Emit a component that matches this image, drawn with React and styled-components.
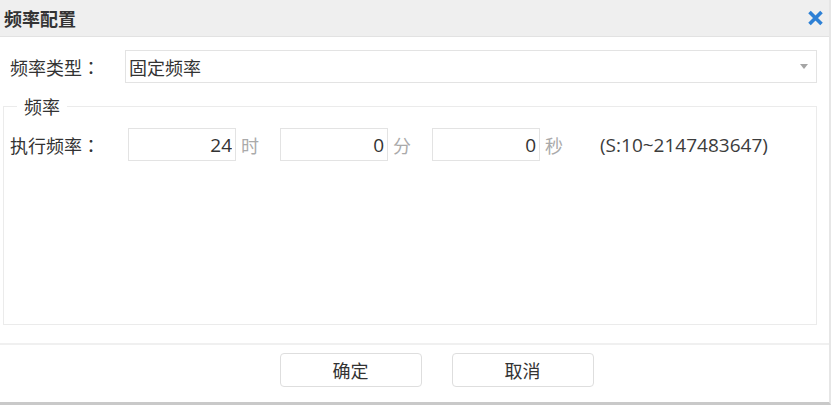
import React from "react";
import styled, { createGlobalStyle } from "styled-components";

const GlobalStyle = createGlobalStyle`
  html, body {
    margin: 0;
    padding: 0;
    background: #ffffff;
  }
  body {
    font-family: "Open Sans", "Noto Sans CJK SC", sans-serif;
    color: #333;
    overflow: hidden;
  }
`;

const Dialog = styled.div`
  width: 831px;
  height: 405px;
  box-sizing: border-box;
  display: flex;
  flex-direction: column;
  background: #fff;
  border-right: 2px solid #e6e6e6;
  border-bottom: 3px solid #c9c9c9;
`;

const Header = styled.div`
  height: 36px;
  flex: none;
  display: flex;
  align-items: center;
  justify-content: space-between;
  padding: 0 4px 0 4px;
  background: #efefef;
  border-bottom: 1px solid #e2e2e2;
`;

const Title = styled.h1`
  margin: 0;
  font-size: 18px;
  font-weight: bold;
  color: #333;
  font-family: "Noto Sans CJK SC", sans-serif;
`;

const CloseButton = styled.button`
  width: 20px;
  height: 20px;
  padding: 0;
  border: 0;
  background: none;
  display: flex;
  align-items: center;
  justify-content: center;
  cursor: pointer;
`;

const Body = styled.div`
  flex: 1;
  padding: 13px 12px 0 3px;
`;

const FormRow = styled.div`
  display: flex;
  align-items: center;
  height: 33px;
  padding-left: ${(p) => p.$indent || 0}px;
`;

const Label = styled.label`
  width: ${(p) => p.$width}px;
  flex: none;
  font-size: 18px;
  color: #333;
  font-family: "Noto Sans CJK SC", sans-serif;
`;

const Colon = styled.span`
  font-family: "Noto Sans CJK TC", sans-serif;
`;

const Select = styled.div`
  flex: 1;
  height: 33px;
  box-sizing: border-box;
  border: 1px solid #e3e3e3;
  display: flex;
  align-items: center;
  justify-content: space-between;
  padding: 0 8px 0 3px;
  font-size: 18px;
  font-family: "Noto Sans CJK SC", sans-serif;
  color: #333;
`;

const Arrow = styled.span`
  width: 0;
  height: 0;
  border-left: 4px solid transparent;
  border-right: 4px solid transparent;
  border-top: 5px solid #a5a5a5;
`;

const Fieldset = styled.fieldset`
  margin: 11px 0 0 0;
  padding: 10px 6px 163px 6px;
  border: 1px solid #ebebeb;
  min-width: 0;
`;

const Legend = styled.legend`
  margin-left: 7px;
  padding: 0 7px;
  font-size: 18px;
  line-height: 24px;
  color: #333;
  font-family: "Noto Sans CJK SC", sans-serif;
`;

const TimeGroup = styled.div`
  width: 152px;
  flex: none;
  display: flex;
  align-items: center;
`;

const NumberInput = styled.input`
  width: 108px;
  height: 33px;
  box-sizing: border-box;
  border: 1px solid #e3e3e3;
  padding: 0 3px 0 0;
  text-align: right;
  font-size: 19px;
  font-family: "Open Sans", sans-serif;
  color: #333;
  outline: none;
`;

const Unit = styled.span`
  margin-left: 5px;
  font-size: 18px;
  color: #aaa;
  font-family: "Noto Sans CJK SC", sans-serif;
`;

const Hint = styled.span`
  margin-left: 16px;
  font-size: 19px;
  color: #3c3c3c;
  font-family: "Open Sans", sans-serif;
`;

const Footer = styled.div`
  flex: none;
  border-top: 2px solid #f0f0f0;
  padding: 8px 0 15px 44px;
  display: flex;
  justify-content: center;
  gap: 30px;
`;

const Button = styled.button`
  width: 142px;
  height: 34px;
  box-sizing: border-box;
  border: 1px solid #dedede;
  border-radius: 4px;
  background: #fff;
  font-size: 18px;
  font-family: "Noto Sans CJK SC", sans-serif;
  color: #333;
  cursor: pointer;
`;

const units = [
  { value: "24", unit: "时" },
  { value: "0", unit: "分" },
  { value: "0", unit: "秒" },
];

const App = () => {
  return (
    <>
      <GlobalStyle />
      <Dialog>
        <Header>
          <Title>频率配置</Title>
          <CloseButton aria-label="关闭">
            <svg width="17" height="16" viewBox="0 0 17 16">
              <path
                d="M2.5 2 L14.5 14 M14.5 2 L2.5 14"
                stroke="#2d80d5"
                strokeWidth="3.6"
                strokeLinecap="butt"
              />
            </svg>
          </CloseButton>
        </Header>
        <Body>
          <FormRow $indent={7}>
            <Label $width={115}>
              频率类型<Colon>：</Colon>
            </Label>
            <Select>
              固定频率
              <Arrow />
            </Select>
          </FormRow>
          <Fieldset>
            <Legend>频率</Legend>
            <FormRow>
              <Label $width={118}>
                执行频率<Colon>：</Colon>
              </Label>
              {units.map((u) => (
                <TimeGroup key={u.unit}>
                  <NumberInput defaultValue={u.value} />
                  <Unit>{u.unit}</Unit>
                </TimeGroup>
              ))}
              <Hint>(S:10~2147483647)</Hint>
            </FormRow>
          </Fieldset>
        </Body>
        <Footer>
          <Button>确定</Button>
          <Button>取消</Button>
        </Footer>
      </Dialog>
    </>
  );
};

export default App;
